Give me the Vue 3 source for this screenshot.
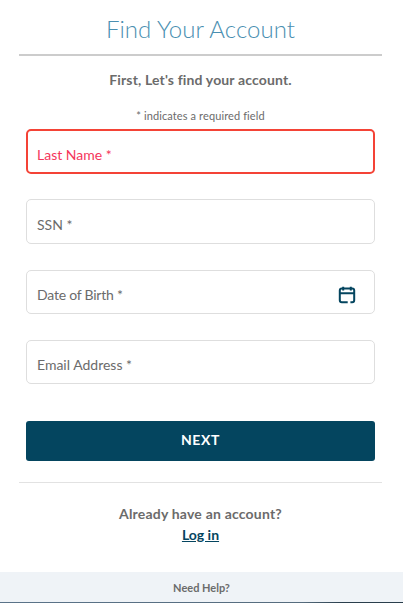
<template>
  <div class="account-modal">
    <main class="content">
      <h1 class="title">Find Your Account</h1>

      <form class="account-form" @submit.prevent>
        <p class="intro">First, Let's find your account.</p>
        <p class="required-note">* indicates a required field</p>

        <label
          v-for="field in fields"
          :key="field.id"
          class="field"
          :class="[field.id, { invalid: field.invalid }]"
        >
          <span class="field-label">{{ field.label }} *</span>
          <input v-model="field.value" type="text" :name="field.id" />
          <svg
            v-if="field.id === 'dob'"
            class="calendar-icon"
            width="20"
            height="20"
            viewBox="0 0 20 20"
            fill="none"
          >
            <path
              d="M13.4 17.2H15.2Q17.2 17.2 17.2 15.2V5.6Q17.2 3.6 15.2 3.6H4.8Q2.8 3.6 2.8 5.6V15.2Q2.8 17.2 4.8 17.2H10.7M2.8 8.2H17.2M6.2 1.8V5.4M13.8 1.8V5.4"
              stroke="currentColor"
              stroke-width="2"
            />
          </svg>
        </label>

        <button type="submit" class="next-button">NEXT</button>
      </form>

      <div class="login">
        <p class="login-text">Already have an account?</p>
        <a href="#" class="login-link">Log in</a>
      </div>
    </main>

    <footer class="help"><span>Need Help?</span></footer>
  </div>
</template>

<script setup>
import { reactive } from 'vue'

const fields = reactive([
  { id: 'last-name', label: 'Last Name', value: '', invalid: true },
  { id: 'ssn', label: 'SSN', value: '', invalid: false },
  { id: 'dob', label: 'Date of Birth', value: '', invalid: false },
  { id: 'email', label: 'Email Address', value: '', invalid: false }
])
</script>

<style>
body {
  margin: 0;
  background: #fff;
}
</style>

<style scoped>
.account-modal {
  box-sizing: border-box;
  height: 603px;
  display: flex;
  flex-direction: column;
  overflow: hidden;
  font-family: 'Proxima Nova', Lato, 'Open Sans', sans-serif;
  color: #6b6b6b;
  background: #fff;
}

.content {
  flex: 1;
  padding: 0 21px 0 19px;
}

.title {
  box-sizing: border-box;
  height: 56px;
  margin: 0;
  padding-top: 14px;
  border-bottom: 2px solid #ccc;
  font-size: 24px;
  font-weight: 300;
  line-height: 30px;
  letter-spacing: 0.05px;
  text-align: center;
  color: #4a8fb1;
}

.account-form {
  display: flex;
  flex-direction: column;
  height: 426px;
  padding: 0 7px;
  border-bottom: 1px solid #e2e2e2;
}

.intro {
  margin: 14px 0 0;
  font-size: 14px;
  font-weight: 700;
  line-height: 20px;
  letter-spacing: 0.14px;
  text-align: center;
}

.required-note {
  margin: 18px 0 5px;
  font-size: 11px;
  line-height: 16px;
  letter-spacing: 0.11px;
  text-align: center;
}

.field {
  box-sizing: border-box;
  display: flex;
  align-items: center;
  height: 44px;
  margin-bottom: 26px;
  padding: 5px 17px 0 10px;
  border: 1px solid #dedede;
  border-radius: 5px;
  font-size: 14px;
}

.field.invalid {
  height: 45px;
  margin-bottom: 25px;
  padding: 7px 16px 0 9px;
  border: 2px solid #f44336;
  color: #f5365c;
}

.field.ssn {
  height: 45px;
  padding-top: 7px;
}

.field-label {
  line-height: 18px;
  white-space: nowrap;
}

.dob .field-label {
  letter-spacing: -0.22px;
}

.field input {
  flex: 1;
  min-width: 0;
  padding: 0;
  border: 0;
  outline: 0;
  background: transparent;
  font: inherit;
}

.calendar-icon {
  margin-top: 1px;
  color: #04455f;
}

.next-button {
  height: 40px;
  margin-top: 11px;
  padding: 0 0 3px;
  border: 0;
  border-radius: 3px;
  background: #04455f;
  color: #fff;
  font-family: inherit;
  font-size: 14px;
  font-weight: 700;
  letter-spacing: 0.6px;
}

.login {
  padding-top: 20px;
  font-size: 14px;
  font-weight: 700;
  line-height: 21px;
  text-align: center;
}

.login-text {
  margin: 0;
  letter-spacing: 0.2px;
}

.login-link {
  color: #04455f;
  text-decoration: underline;
}

.help {
  box-sizing: border-box;
  height: 31px;
  background:
    linear-gradient(to right, #5a7389, #566c7e 75%, #2a3e4c 85%) bottom / 100% 1px no-repeat,
    #eff3f7;
  font-size: 11px;
  font-weight: 700;
  line-height: 32px;
  text-align: center;
}
</style>
